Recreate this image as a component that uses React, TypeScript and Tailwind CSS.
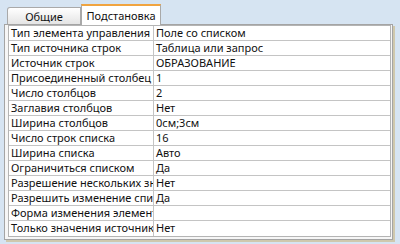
import React from "react";

const rows: [string, string][] = [
  ["Тип элемента управления", "Поле со списком"],
  ["Тип источника строк", "Таблица или запрос"],
  ["Источник строк", "ОБРАЗОВАНИЕ"],
  ["Присоединенный столбец", "1"],
  ["Число столбцов", "2"],
  ["Заглавия столбцов", "Нет"],
  ["Ширина столбцов", "0см;3см"],
  ["Число строк списка", "16"],
  ["Ширина списка", "Авто"],
  ["Ограничиться списком", "Да"],
  ["Разрешение нескольких значений", "Нет"],
  ["Разрешить изменение списка", "Да"],
  ["Форма изменения элементов списка", ""],
  ["Только значения источника строк", "Нет"],
];

export default function App() {
  return (
    <div
      className="w-[400px] h-[244px] bg-[#d6e4f2] overflow-hidden text-[11px] text-[#111]"
      style={{ fontFamily: '"Noto Sans", "Liberation Sans", sans-serif' }}
    >
      <div className="flex items-end h-[24px] pl-[7px]">
        <div className="w-[74px] h-[17px] border border-b-0 border-[#a9a9a9] rounded-tl-[3px] bg-gradient-to-b from-[#ffffff] to-[#e4e4e4] flex items-center justify-center leading-none">
          Общие
        </div>
        <div className="w-[80px] h-[21px] -mb-[1px] relative z-10 border-t-2 border-t-[#f0a440] border-x border-x-[#a9a9a9] bg-white flex items-center justify-center leading-none pb-[1px]">
          Подстановка
        </div>
      </div>
      <div className="ml-[4px] w-[391px] h-[218px] flex">
        <div className="flex flex-col w-[389px]">
          <div className="w-[389px] h-[216px] border border-[#a4a4a4] bg-[#f6f6f6] pt-[0px] pl-[3px] pb-[3px]">
            <div className="w-[383px] border border-[#b4b4b4] bg-white">
              {rows.map(([label, value], i) => (
                <div
                  key={i}
                  className={`flex h-[15px] ${i < rows.length - 1 ? "border-b border-[#c4c4c4]" : ""}`}
                >
                  <div className="w-[145px] shrink-0 border-r border-[#c4c4c4] pl-[2px] overflow-hidden whitespace-nowrap leading-[14px]">
                    {label}
                  </div>
                  <div className="flex-1 pl-[2px] overflow-hidden whitespace-nowrap leading-[14px]">
                    {value}
                  </div>
                </div>
              ))}
            </div>
          </div>
          <div className="h-[2px] ml-[2px] bg-[#cfc8ad]" />
        </div>
        <div className="w-[2px] mt-[2px] h-[216px] bg-[#cfc8ad]" />
      </div>
    </div>
  );
}
